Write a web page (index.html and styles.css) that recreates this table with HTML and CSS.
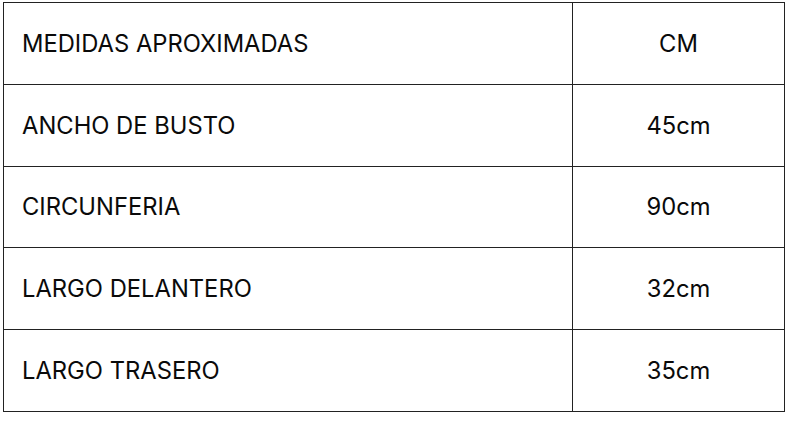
FILE: index.html
```html
<!DOCTYPE html>
<html>
<head>
<meta charset="utf-8">
<link rel="stylesheet" href="styles.css">
</head>
<body>
<table class="sizes">
  <tr><td class="label">MEDIDAS APROXIMADAS</td><td class="value">CM</td></tr>
  <tr><td class="label">ANCHO DE BUSTO</td><td class="value">45cm</td></tr>
  <tr><td class="label">CIRCUNFERIA</td><td class="value">90cm</td></tr>
  <tr><td class="label">LARGO DELANTERO</td><td class="value">32cm</td></tr>
  <tr><td class="label">LARGO TRASERO</td><td class="value">35cm</td></tr>
</table>
</body>
</html>
```
FILE: styles.css
```css
html, body {
  margin: 0;
  background: #fff;
}
body {
  padding: 2px 0 0 3px;
  font-family: Inter, "Liberation Sans", sans-serif;
  color: #0a0a0a;
}
.sizes {
  border-collapse: collapse;
  width: 782px;
}
.sizes td {
  border: 1px solid #222;
  height: 81.8px;
  padding: 0 18px;
  font-size: 23.75px;
  vertical-align: middle;
  box-sizing: border-box;
}
.label {
  width: 569px;
  text-align: left;
}
.value {
  text-align: center;
}
```
